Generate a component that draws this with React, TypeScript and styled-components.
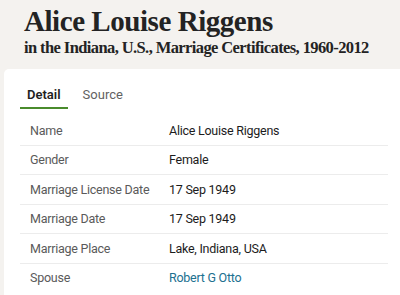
import React from "react";
import styled, { createGlobalStyle } from "styled-components";

const GlobalStyle = createGlobalStyle`
  html, body {
    margin: 0;
    padding: 0;
    background: #f4f2ef;
    overflow: hidden;
  }
`;

const Page = styled.div`
  width: 400px;
  height: 295px;
  overflow: hidden;
  background: #f4f2ef;
`;

const Header = styled.header`
  padding: 5px 0 0 24px;
  color: #232323;
  font-family: "Liberation Serif", "DejaVu Serif", serif;
  white-space: nowrap;
`;

const Title = styled.h1`
  margin: 0;
  font-size: 29px;
  line-height: 32px;
  font-weight: 700;
  letter-spacing: -0.45px;
`;

const Subtitle = styled.h2`
  margin: 0;
  font-size: 16.5px;
  line-height: 21px;
  font-weight: 700;
  letter-spacing: -0.6px;
`;

const Card = styled.section`
  margin: 11px 0 0 4px;
  width: 400px;
  background: #ffffff;
  border-radius: 5px;
  padding: 16px 16px 24px 16px;
  box-sizing: border-box;
  font-family: Roboto, "Liberation Sans", sans-serif;
`;

const Tabs = styled.div`
  display: flex;
`;

const Tab = styled.div<{ $active?: boolean }>`
  padding: 2px 7px 4px 7px;
  margin-right: 8px;
  font-size: 13px;
  line-height: 16px;
  font-weight: ${(p) => (p.$active ? 600 : 400)};
  color: ${(p) => (p.$active ? "#1f1f1f" : "#626262")};
  border-bottom: 2.5px solid ${(p) => (p.$active ? "#4a8b2c" : "transparent")};
`;

const Table = styled.div`
  margin-top: 7px;
`;

const Row = styled.div<{ $last?: boolean }>`
  display: grid;
  grid-template-columns: 149px 1fr;
  align-items: center;
  height: 28.5px;
  border-bottom: 1px solid ${(p) => (p.$last ? "transparent" : "#ececec")};
  font-size: 12.5px;
  letter-spacing: -0.25px;
`;

const Label = styled.div`
  padding-left: 10px;
  color: #5a5a5a;
`;

const Value = styled.div`
  color: #1c1c1c;
`;

const Link = styled.a`
  color: #21708f;
  text-decoration: none;
`;

const rows: [string, React.ReactNode][] = [
  ["Name", "Alice Louise Riggens"],
  ["Gender", "Female"],
  ["Marriage License Date", "17 Sep 1949"],
  ["Marriage Date", "17 Sep 1949"],
  ["Marriage Place", "Lake, Indiana, USA"],
  ["Spouse", <Link href="#">Robert G Otto</Link>],
];

export default function App() {
  return (
    <Page>
      <GlobalStyle />
      <Header>
        <Title>Alice Louise Riggens</Title>
        <Subtitle>in the Indiana, U.S., Marriage Certificates, 1960-2012</Subtitle>
      </Header>
      <Card>
        <Tabs>
          <Tab $active>Detail</Tab>
          <Tab>Source</Tab>
        </Tabs>
        <Table>
          {rows.map(([label, value], i) => (
            <Row key={label} $last={i === rows.length - 1}>
              <Label>{label}</Label>
              <Value>{value}</Value>
            </Row>
          ))}
        </Table>
      </Card>
    </Page>
  );
}
